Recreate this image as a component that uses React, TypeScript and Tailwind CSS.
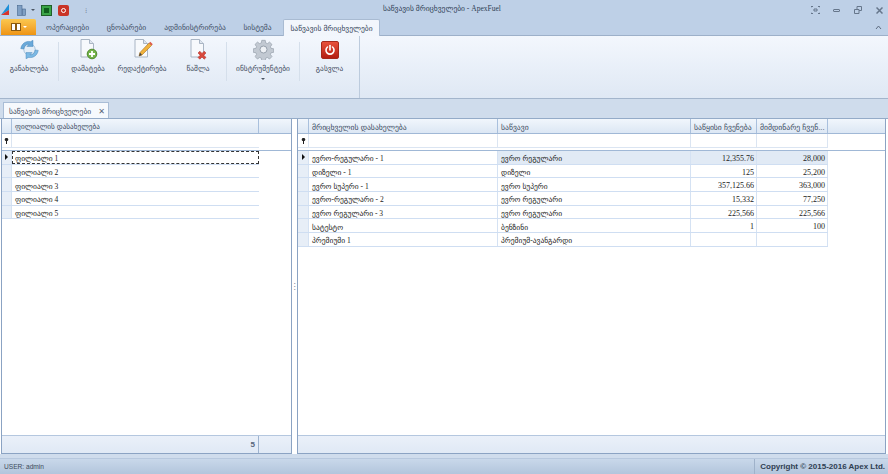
import React from 'react';

const font = "font-['Liberation_Sans','DejaVu_Sans',sans-serif]";
// digits in the grids and in the title are serif in the picture
const cellFont = "font-['Liberation_Serif','DejaVu_Sans',serif]";

const branches = ['ფილიალი 1', 'ფილიალი 2', 'ფილიალი 3', 'ფილიალი 4', 'ფილიალი 5'];

const meters = [
  ['ევრო-რეგულარი - 1', 'ევრო რეგულარი', '12,355.76', '28,000'],
  ['დიზელი - 1', 'დიზელი', '125', '25,200'],
  ['ევრო სუპერი - 1', 'ევრო სუპერი', '357,125.66', '363,000'],
  ['ევრო-რეგულარი - 2', 'ევრო რეგულარი', '15,332', '77,250'],
  ['ევრო რეგულარი - 3', 'ევრო რეგულარი', '225,566', '225,566'],
  ['სატესტო', 'ბენზინი', '1', '100'],
  ['პრემიუმი 1', 'პრემიუმ-ავანგარდი', '', ''],
];

const RefreshIcon = () => (
  <svg width="21" height="21" viewBox="0 0 24 24">
    <circle cx="12" cy="12" r="6.5" fill="#e4eef8" stroke="#9dbcd6" />
    <path d="M2 11c1-6 6-9 11-8l3-1.500v7h-7l2.500-2.500C8.500 5.500 6 8 5.500 11.500z" fill="#6aa9da" stroke="#3f7fb4" strokeWidth=".5" />
    <path d="M22 13c-1 6-6 9-11 8l-3 1.500v-7h7l-2.500 2.500c3 .5 5.500-2 6-5.500z" fill="#7cb9e4" stroke="#3f7fb4" strokeWidth=".5" />
  </svg>
);

const Page = ({ children }: { children?: React.ReactNode }) => (
  <svg width="20" height="21" viewBox="0 0 20 21" className="overflow-visible">
    <path d="M3 .5h8.500l4 4V18H3z" fill="#f7f9fc" stroke="#a9b5c4" />
    <path d="M11.500.5v4h4" fill="#dfe6ef" stroke="#a9b5c4" />
    {children}
  </svg>
);

const AddIcon = () => (
  <Page>
    <circle cx="14" cy="15" r="4.800" fill="#74b34a" stroke="#4e8a2d" />
    <path d="M14 12v6M11 15h6" stroke="#fff" strokeWidth="1.800" />
  </Page>
);

const EditIcon = () => (
  <Page>
    <path d="M7 17l1-3.500L17 4l2.500 2.500L10 16z" fill="#f0b23c" stroke="#a86f1c" strokeWidth=".6" />
    <path d="M17 4l1.300-1.300 2.500 2.500-1.300 1.300z" fill="#dd5c4c" />
    <path d="M7 17l1-3.500 2 2.500z" fill="#444" />
  </Page>
);

const DeleteIcon = () => (
  <Page>
    <path d="M10 14l1.800-1.800 2.200 2.200 2.200-2.200L18 14l-2.200 2.200 2.200 2.200-1.800 1.800-2.200-2.200-2.200 2.200-1.800-1.800 2.200-2.200z" fill="#d9483c" stroke="#a82a20" strokeWidth=".5" />
  </Page>
);

const GearIcon = () => (
  <svg width="21" height="21" viewBox="0 0 24 24">
    <path
      d="M10 1.500h4l.5 3 1.900.8 2.500-1.800 2.800 2.800-1.800 2.500.8 1.900 3 .5v4l-3 .5-.8 1.900 1.800 2.500-2.800 2.800-2.500-1.800-1.900.8-.5 3h-4l-.5-3-1.900-.8-2.500 1.800-2.800-2.800 1.800-2.500-.8-1.900-3-.5v-4l3-.5.8-1.900-1.800-2.500 2.800-2.800 2.500 1.800 1.900-.8z"
      fill="#c2c9d2"
      stroke="#8d97a3"
      strokeWidth=".7"
    />
    <circle cx="12" cy="12" r="4" fill="#eef1f5" stroke="#8d97a3" />
  </svg>
);

const PowerIcon = () => (
  <div className="flex h-[18px] w-[18px] items-center justify-center rounded-[2px] border border-[#a52a1c] bg-gradient-to-b from-[#e8503a] to-[#b41e12]">
    <svg width="12" height="12" viewBox="0 0 12 12" fill="none" stroke="#fff" strokeWidth="1.600" strokeLinecap="round">
      <path d="M3.500 3a4 4 0 1 0 5 0" />
      <path d="M6 1.500v4.500" />
    </svg>
  </div>
);

const FilterPin = () => (
  <svg width="5" height="6" viewBox="0 0 5 6">
    <path d="M2.500 0a1.500 1.500 0 0 1 .5 3v3H2V3a1.500 1.500 0 0 1 .5-3z" fill="#222" />
  </svg>
);

function RibbonButton({ label, width, icon, caret }: { label: string; width: string; icon: React.ReactNode; caret?: boolean }) {
  return (
    <div className={`flex flex-col items-center ${width}`}>
      <div className="flex h-[21px] items-center justify-center">{icon}</div>
      <div className="mt-[3px] whitespace-nowrap text-[7.400px] leading-[12px] text-[#3f4b5c]">{label}</div>
      {caret && <div className="mt-[3px] h-0 w-0 border-x-[2px] border-t-[2px] border-x-transparent border-t-[#4a5563]" />}
    </div>
  );
}

const Divider = () => <div className="mt-[3px] h-[39px] w-px bg-[#d5dfeb]" />;

const HeaderCell = ({ className, children }: { className: string; children?: React.ReactNode }) => (
  <div className={`flex items-center overflow-hidden whitespace-nowrap border-r border-[#a9c0dd] px-[2px] pt-[3px] text-[#3b4a5e] ${className}`}>
    {children}
  </div>
);

function App() {
  return (
    <div className={`flex h-[474px] w-[888px] flex-col overflow-hidden bg-[#cfdcec] ${font}`}>
      {/* title bar */}
      <div className="bg-[#bed0e7]">
        <div className="relative flex h-[20px] items-center">
          <svg width="9" height="12" viewBox="0 0 9 12" className="ml-px">
            <path d="M0 11L8 0v6z" fill="#1e8fd8" />
            <path d="M0 11l8-5v5z" fill="#d8322a" />
          </svg>
          <svg width="9" height="11" viewBox="0 0 9 11" className="ml-[7px]">
            <rect x=".5" y=".5" width="4.500" height="10" fill="#7f9fc4" stroke="#47678e" strokeWidth=".6" />
            <rect x="5.500" y="4" width="3" height="6.500" fill="#7f9fc4" stroke="#47678e" strokeWidth=".6" />
          </svg>
          <div className="ml-[5px] h-0 w-0 border-x-[2px] border-t-[2px] border-x-transparent border-t-[#4a5563]" />
          <div className="ml-[6px] flex h-[11px] w-[11px] items-center justify-center border border-[#1f5f2a] bg-[#3aa548]">
            <div className="h-[5px] w-[5px] bg-[#0f5f1e]" />
          </div>
          <div className="ml-[6px] flex h-[11px] w-[11px] items-center justify-center rounded-[2px] bg-[#c93427]">
            <div className="h-[5px] w-[5px] rounded-full border border-white" />
          </div>
          <div className="ml-[16px] text-[7px] leading-none text-[#56657a]">⁝</div>
          <div className={`absolute left-[383px] top-[2px] whitespace-nowrap text-[7.500px] leading-[14px] text-[#303f55] ${cellFont}`}>საწვავის მრიცხველები - ApexFuel</div>
          <div className="ml-auto flex items-center text-[#66768b]">
            <svg width="9" height="8" viewBox="0 0 9 8" fill="none" stroke="currentColor" className="mr-[13px]">
              <path d="M0 1.500V.5h2M7 .5h2v1M0 6.500v1h2M7 7.500h2v-1M3 3h3v2H3z" />
            </svg>
            <div className="mr-[14px] h-[3px] w-[7px] rounded-[1px] border border-current" />
            <svg width="8" height="8" viewBox="0 0 8 8" fill="none" stroke="currentColor" className="mr-[14px]">
              <path d="M.5 3.500h4.500v4H.5zM3 3V.5h4.500v4H5" />
            </svg>
            <svg width="7" height="7" viewBox="0 0 7 7" fill="none" stroke="currentColor" strokeWidth="1.500" className="mr-[5px]">
              <path d="M.5.5l6 6M6.500.5l-6 6" />
            </svg>
          </div>
        </div>
        {/* ribbon tabs */}
        <div className="flex h-[16px] items-end border-b border-[#9db0c9] pl-px text-[7.500px] text-[#3f4f66]">
          <div className="flex h-[16px] w-[35px] items-center justify-center rounded-t-[2px] bg-gradient-to-b from-[#fbc74e] to-[#ee9410]">
            <div className="flex h-[8px] w-[10px] justify-center border border-[#8a5a10] bg-white">
              <div className="h-full w-[2px] bg-[#8a5a10]" />
            </div>
            <div className="ml-[2px] h-0 w-0 border-x-[2px] border-t-[2px] border-x-transparent border-t-white" />
          </div>
          <div className="flex h-[16px] w-[63px] items-center justify-center pt-[2px]">ოპერაციები</div>
          <div className="flex h-[16px] w-[55px] items-center justify-center pt-[2px]">ცნობარები</div>
          <div className="flex h-[16px] w-[82px] items-center justify-center pt-[2px]">ადმინისტრირება</div>
          <div className="flex h-[16px] w-[43px] items-center justify-center pt-[2px]">სისტემა</div>
          <div className="relative top-px ml-[4px] flex h-[17px] w-[97px] items-center justify-center rounded-t-[2px] border border-b-0 border-[#a9bbd2] bg-[#f2f6fc] pt-[2px] text-[#34445a]">
            საწვავის მრიცხველები
          </div>
          <svg width="7" height="5" viewBox="0 0 7 5" fill="none" stroke="#5e6c80" className="mb-[5px] ml-auto mr-[6px]">
            <path d="M1 4l2.500-3L6 4" />
          </svg>
        </div>
      </div>

      {/* ribbon */}
      <div className="flex h-[63px] border-b border-[#a3b5cc] bg-gradient-to-b from-[#f3f7fd] to-[#dfe8f4]">
        <div className="flex h-[62px] w-[360px] items-start border-r border-[#bccbdd] pt-[3px]">
          <RibbonButton label="განახლება" width="w-[58px]" icon={<RefreshIcon />} />
          <Divider />
          <RibbonButton label="დამატება" width="w-[58px]" icon={<AddIcon />} />
          <RibbonButton label="რედაქტირება" width="w-[50px]" icon={<EditIcon />} />
          <RibbonButton label="წაშლა" width="w-[59px] pl-[3px]" icon={<DeleteIcon />} />
          <Divider />
          <RibbonButton label="ინსტრუმენტები" width="w-[72px]" icon={<GearIcon />} caret />
          <Divider />
          <RibbonButton label="გასვლა" width="w-[59px]" icon={<PowerIcon />} />
        </div>
      </div>

      {/* document tab strip */}
      <div className="flex h-[19px] items-end bg-[#cfdcec] pl-[3px]">
        <div className="flex h-[16px] w-[106px] items-center border border-b-0 border-[#a9bdd6] bg-[#f6f9fd] pl-[5px] pt-[3px] text-[7.500px] text-[#3b4a5e]">
          <span className="whitespace-nowrap">საწვავის მრიცხველები</span>
          <span className="ml-auto mr-[3px] text-[8px] font-bold leading-none text-[#56657a]">✕</span>
        </div>
      </div>

      {/* grids */}
      <div className="flex h-[336px] border-t border-[#94abc8] bg-white">
        <div className="ml-px flex h-[335px] w-[291px] flex-col border-x border-b border-[#8ba3c3]">
          <div className="flex h-[15px] border-b border-[#a0b8d6] bg-gradient-to-b from-[#f1f6fc] to-[#dce7f4] text-[7.200px]">
            <HeaderCell className="w-[10px]" />
            <HeaderCell className="w-[247px] pl-[3px]">ფილიალის დასახელება</HeaderCell>
          </div>
          <div className="flex h-[14px] w-[257px] border-b border-[#dbe5f2]">
            <div className="flex w-[10px] items-center justify-center border-r border-[#dbe5f2] bg-white">
              <FilterPin />
            </div>
          </div>
          <div className="h-[3px] border-b border-[#a0b8d6]" />
          {branches.map((b, i) => (
            <div key={b} className="flex h-[13.700px] w-[257px] border-b border-[#cfdef2]">
              <div className="flex w-[10px] items-center justify-center border-r border-[#d5e2f3] bg-[#e7eef7]">
                {i === 0 && <div className="h-0 w-0 border-y-[3px] border-l-[3px] border-y-transparent border-l-[#111]" />}
              </div>
              <div className={`flex flex-1 items-center pl-[3px] pt-[3px] text-[7.500px] text-[#222] ${cellFont} ${i === 0 ? 'outline-1 -outline-offset-1 outline-dashed outline-[#333]' : ''}`}>{b}</div>
            </div>
          ))}
          <div className="flex-1" />
          <div className="flex h-[18px] border-t border-[#b4c7df] bg-gradient-to-b from-[#eaf0f9] to-[#e0e9f5]">
            <div className="flex w-[257px] items-center justify-end border-r border-[#9db3cf] pr-[3px] text-[8px] font-bold text-[#55657b]">5</div>
          </div>
        </div>

        {/* splitter */}
        <div className="flex w-[5px] items-center justify-center bg-white">
          <div className="text-[8px] leading-none text-[#6d7d92]">⋮</div>
        </div>

        <div className="flex h-[335px] w-[589px] flex-col border-x border-b border-[#8ba3c3]">
          <div className="flex h-[15px] border-b border-[#a0b8d6] bg-gradient-to-b from-[#f1f6fc] to-[#dce7f4] text-[7.700px]">
            <HeaderCell className="w-[11px]" />
            <HeaderCell className="w-[189px] pl-[3px]">მრიცხველის დასახელება</HeaderCell>
            <HeaderCell className="w-[193px] pl-[3px]">საწვავი</HeaderCell>
            <HeaderCell className="w-[66px] pl-[3px]">საწყისი ჩვენება</HeaderCell>
            <HeaderCell className="w-[71px] pl-[3px]">მიმდინარე ჩვენ...</HeaderCell>
          </div>
          <div className="flex h-[14px] w-[530px] border-b border-[#dbe5f2]">
            <div className="flex w-[11px] items-center justify-center border-r border-[#dbe5f2]">
              <FilterPin />
            </div>
            <div className="w-[189px] border-r border-[#dbe5f2]" />
            <div className="w-[193px] border-r border-[#dbe5f2]" />
            <div className="w-[66px] border-r border-[#dbe5f2]" />
            <div className="w-[71px] border-r border-[#dbe5f2]" />
          </div>
          <div className="h-[3px] border-b border-[#a0b8d6]" />
          {meters.map((m, i) => (
            <div key={i} className={`flex h-[13.700px] w-[530px] border-b border-[#cfdef2] text-[7.500px] text-[#222] ${cellFont}`}>
              <div className="flex w-[11px] items-center justify-center border-r border-[#d5e2f3] bg-[#e7eef7]">
                {i === 0 && <div className="h-0 w-0 border-y-[3px] border-l-[3px] border-y-transparent border-l-[#111]" />}
              </div>
              <div className="flex w-[189px] items-center border-r border-[#d5e2f3] pl-[3px] pt-[3px]">{m[0]}</div>
              <div className={`flex w-[193px] items-center border-r border-[#d5e2f3] pl-[3px] pt-[3px] ${i === 0 ? 'bg-[#e1eaf5]' : ''}`}>{m[1]}</div>
              <div className={`flex w-[66px] items-center justify-end border-r border-[#d5e2f3] pr-[2px] pt-[3px] text-[8px] text-[#222] ${i === 0 ? 'bg-[#e1eaf5]' : ''}`}>{m[2]}</div>
              <div className={`flex w-[71px] items-center justify-end border-r border-[#d5e2f3] pr-[2px] pt-[3px] text-[8px] text-[#222] ${i === 0 ? 'bg-[#e1eaf5]' : ''}`}>{m[3]}</div>
            </div>
          ))}
          <div className="flex-1" />
          <div className="h-[18px] border-t border-[#b4c7df] bg-gradient-to-b from-[#eaf0f9] to-[#e0e9f5]" />
        </div>
      </div>

      {/* status bar */}
      <div className="mt-[4px] flex flex-1 items-center border-t border-[#b7c8de] bg-gradient-to-b from-[#c9d8ea] to-[#b2c5dc] text-[8px]">
        <span className="pl-[4px] text-[6.600px] text-[#3d4c60]">USER: admin</span>
        <div className="ml-auto flex h-full items-center border-l border-[#9fb2ca] pl-[5px] pr-[3px] font-bold text-[#2f3e52]">Copyright © 2015-2016 Apex Ltd.</div>
      </div>
    </div>
  );
}

export default App;
